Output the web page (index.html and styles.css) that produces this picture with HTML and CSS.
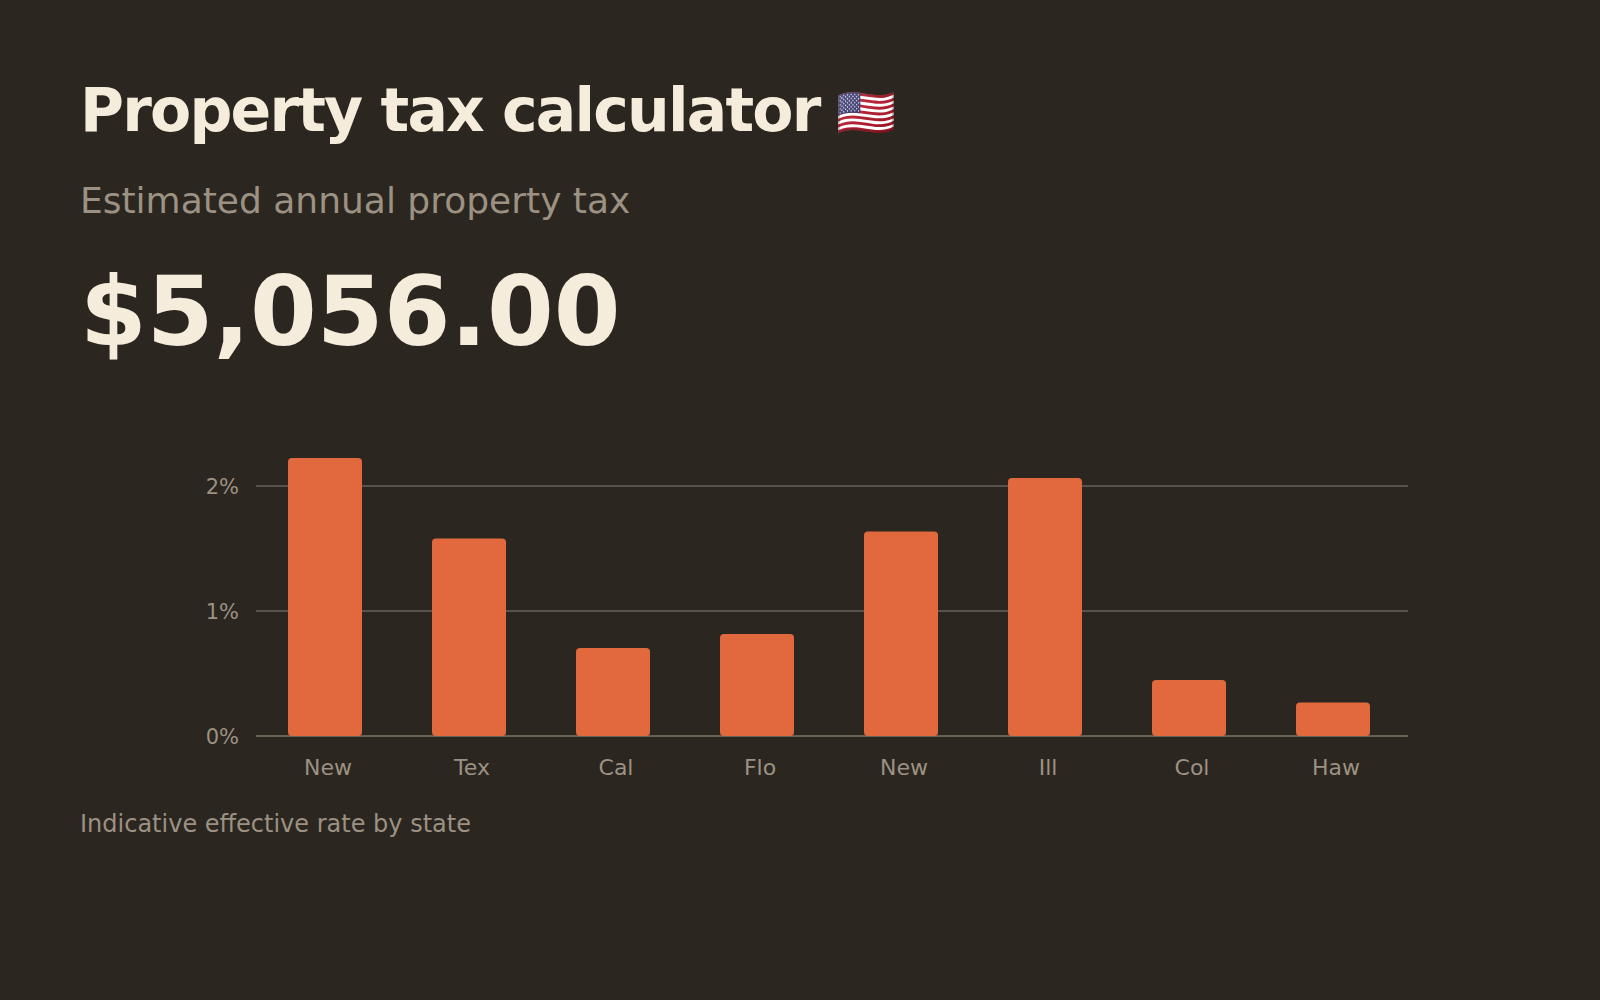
FILE: index.html
```html
<!DOCTYPE html>
<html lang="en">
<head>
<meta charset="utf-8">
<title>Property tax calculator</title>
<link rel="stylesheet" href="styles.css">
</head>
<body>
<main class="page">
  <h1 class="title">Property tax calculator <span class="flag">🇺🇸</span></h1>
  <p class="subtitle">Estimated annual property tax</p>
  <p class="amount">$5,056.00</p>
  <div class="chart">
    <svg class="chart-svg" width="1360" height="370" viewBox="0 0 1360 370" xmlns="http://www.w3.org/2000/svg">
      <g class="grid">
        <line x1="176" y1="56" x2="1328" y2="56"/>
        <line x1="176" y1="181" x2="1328" y2="181"/>
        <line class="base" x1="176" y1="306" x2="1328" y2="306"/>
      </g>
      <g class="ylabels">
        <text x="159" y="63.5">2%</text>
        <text x="159" y="188.5">1%</text>
        <text x="159" y="313.5">0%</text>
      </g>
      <g class="bars">
        <rect x="208" y="28" width="74" height="278" rx="4"/>
        <rect x="352" y="108.5" width="74" height="197.5" rx="4"/>
        <rect x="496" y="218" width="74" height="88" rx="4"/>
        <rect x="640" y="204" width="74" height="102" rx="4"/>
        <rect x="784" y="101.5" width="74" height="204.5" rx="4"/>
        <rect x="928" y="48" width="74" height="258" rx="4"/>
        <rect x="1072" y="250" width="74" height="56" rx="4"/>
        <rect x="1216" y="272.5" width="74" height="33.5" rx="4"/>
      </g>
      <g class="xlabels">
        <text x="248" y="345">New</text>
        <text x="392" y="345">Tex</text>
        <text x="536" y="345">Cal</text>
        <text x="680" y="345">Flo</text>
        <text x="824" y="345">New</text>
        <text x="968" y="345">Ill</text>
        <text x="1112" y="345">Col</text>
        <text x="1256" y="345">Haw</text>
      </g>
    </svg>
  </div>
  <p class="caption">Indicative effective rate by state</p>
</main>
</body>
</html>
```
FILE: styles.css
```css
html, body {
  margin: 0;
  padding: 0;
  background: #2b2620;
}
body {
  font-family: "DejaVu Sans", "Noto Sans", sans-serif;
  color: #f5ecdc;
}
.page {
  padding: 72px 80px 0 80px;
  display: flex;
  flex-direction: column;
  align-items: flex-start;
}
.title {
  margin: 0;
  height: 76px;
  font-size: 60px;
  font-weight: 700;
  line-height: 76px;
  letter-spacing: -0.03em;
  color: #f5ecdc;
}
.flag {
  font-size: 48px;
  line-height: 1;
  letter-spacing: 0;
  vertical-align: 2px;
  margin-left: -3px;
}
.subtitle {
  margin: 31px 0 0 0;
  font-size: 36px;
  line-height: 44px;
  color: #9c9182;
}
.amount {
  margin: 29px 0 0 0;
  font-size: 96px;
  font-weight: 700;
  line-height: 120px;
  color: #f5ecdc;
}
.chart {
  margin-top: 58px;
}
.chart-svg {
  display: block;
}
.grid line {
  stroke: #5a5248;
  stroke-width: 2;
}
.grid line.base {
  stroke: #6a6155;
}
.bars rect {
  fill: #e2693e;
}
.ylabels text {
  fill: #9c9182;
  font-size: 21px;
  text-anchor: end;
  font-family: "DejaVu Sans", sans-serif;
}
.xlabels text {
  fill: #9c9182;
  font-size: 22px;
  text-anchor: middle;
  font-family: "DejaVu Sans", sans-serif;
}
.caption {
  margin: 10px 0 0 0;
  font-size: 24px;
  line-height: 28px;
  color: #9c9182;
}
```
